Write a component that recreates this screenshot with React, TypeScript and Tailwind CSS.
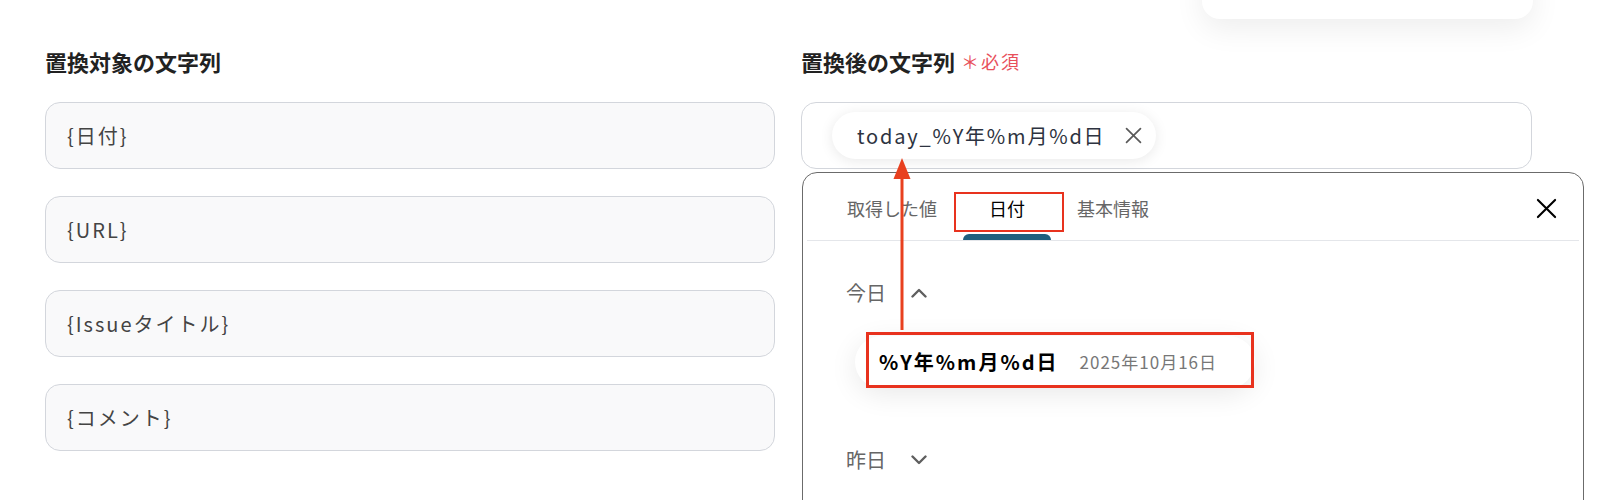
import React from "react";

// 置換フォーム（左: 置換対象 / 右: 置換後 + 日付ピッカー）
const targets = ["{日付}", "{URL}", "{Issueタイトル}", "{コメント}"];

const CloseIcon = ({ size, className }: { size: number; className?: string }) => (
  <svg width={size} height={size} viewBox="0 0 22 22" className={className}>
    <path d="M2 2 20 20M20 2 2 20" stroke="currentColor" strokeWidth="2.2" strokeLinecap="round" />
  </svg>
);

const Chevron = ({ up }: { up?: boolean }) => (
  <svg width="16" height="10" viewBox="0 0 16 10" className="text-[#5f5f5f]">
    <polyline
      points={up ? "1.5,8.5 8,2 14.5,8.5" : "1.5,1.5 8,8 14.5,1.5"}
      fill="none"
      stroke="currentColor"
      strokeWidth="2.4"
      strokeLinecap="round"
      strokeLinejoin="round"
    />
  </svg>
);

export default function App() {
  return (
    <div className="relative h-[500px] w-[1600px] overflow-hidden bg-white font-['Noto_Sans_CJK_JP',sans-serif]">
      {/* 上部の浮いているカード */}
      <div className="absolute left-[1202px] top-[-40px] h-[59px] w-[331px] rounded-[18px] bg-white shadow-[0_10px_30px_rgba(0,0,0,0.07)]" />

      <div className="flex gap-[26px] pl-[45px] pt-[47px]">
        {/* 置換対象 */}
        <div className="flex w-[730px] flex-col">
          <div className="h-[28px] text-[22px] font-bold leading-[28px] text-[#222]">置換対象の文字列</div>
          <div className="mt-[27px] flex flex-col gap-[27px]">
            {targets.map((t) => (
              <div
                key={t}
                className="flex h-[67px] items-center rounded-[15px] border border-[#d3d6dc] bg-[#f9f9fa] px-[21px] text-[20px] tracking-[2px] text-[#444]"
              >
                {t}
              </div>
            ))}
          </div>
        </div>

        {/* 置換後 */}
        <div className="flex w-[731px] flex-col">
          <div className="flex h-[28px] items-center text-[22px] font-bold leading-[28px] text-[#222]">
            置換後の文字列
            <span className="ml-[6px] text-[18px] font-normal text-[#e8505b]">＊</span>
            <span className="ml-[2px] text-[18px] font-normal tracking-[2px] text-[#e8505b]">必須</span>
          </div>

          <div className="mt-[27px] flex h-[67px] items-center rounded-[15px] border border-[#d3d6dc] bg-white pl-[30px]">
            <div className="flex h-[47px] items-center gap-[20px] rounded-full bg-white pl-[25px] pr-[14px] shadow-[0_2px_14px_rgba(0,0,0,0.09)]">
              <span className="text-[20px] tracking-[1.8px] text-[#2d3340]">today_%Y年%m月%d日</span>
              <CloseIcon size={17} className="text-[#5a5a5a]" />
            </div>
          </div>

          {/* 日付ピッカー */}
          <div className="ml-[1px] mt-[3px] h-[340px] w-[782px] rounded-t-[15px] border border-[#6b6b6b] bg-white">
            <div className="mx-[4px] flex justify-between border-b border-[#e4e6ea]">
              <div className="flex pl-[14px]">
                {[
                  { label: "取得した値", active: false },
                  { label: "日付", active: true },
                  { label: "基本情報", active: false },
                ].map((tab) => (
                  <div key={tab.label} className="flex flex-col items-stretch">
                    <div
                      className={`px-[26px] pt-[23px] text-[18px] leading-[24px] ${
                        tab.active ? "text-black" : "text-[#666]"
                      }`}
                    >
                      {tab.label}
                    </div>
                    <div
                      className={`mt-[14px] h-[6px] rounded-t-[6px] ${tab.active ? "bg-[#1f5f7e]" : "bg-transparent"}`}
                    />
                  </div>
                ))}
              </div>
              <CloseIcon size={21} className="mr-[22px] mt-[25px] text-black" />
            </div>

            <div className="pl-[43px]">
              <div className="mt-[38px] flex h-[28px] items-center gap-[25px]">
                <span className="text-[20px] text-[#666]">今日</span>
                <Chevron up />
              </div>

              <div className="ml-[9px] mt-[29px] flex h-[52px] w-[400px] items-center gap-[21px] rounded-full bg-white pl-[24px] shadow-[0_6px_28px_rgba(0,0,0,0.09)]">
                <span className="text-[20px] font-bold tracking-[2px] text-black">%Y年%m月%d日</span>
                <span className="text-[17px] tracking-[1px] text-[#777]">2025年10月16日</span>
              </div>

              <div className="mt-[58px] flex h-[28px] items-center gap-[25px]">
                <span className="text-[20px] text-[#666]">昨日</span>
                <Chevron />
              </div>
            </div>
          </div>
        </div>
      </div>

      {/* 注釈：赤枠と矢印 */}
      <div className="absolute left-[954px] top-[192px] h-[40px] w-[110px] border-2 border-[#e8321e]" />
      <div className="absolute left-[866px] top-[332px] h-[56px] w-[388px] border-[3px] border-[#e8321e]" />
      <svg className="absolute left-[892px] top-[156px]" width="20" height="176" viewBox="0 0 20 176">
        <line x1="10" y1="18" x2="10" y2="174" stroke="#e8401f" strokeWidth="3" />
        <polygon points="10,2 1.5,23 18.5,23" fill="#e8401f" />
      </svg>
    </div>
  );
}
